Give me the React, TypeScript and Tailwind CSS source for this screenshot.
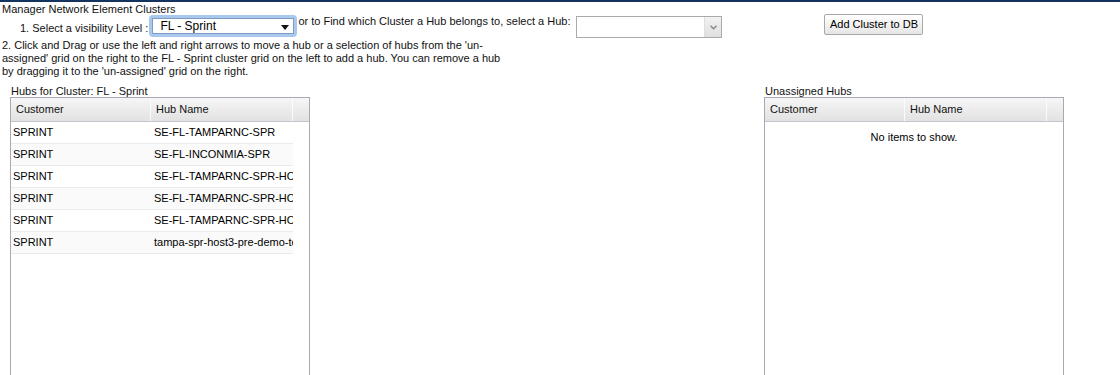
import React from "react";

const rows = [
  ["SPRINT", "SE-FL-TAMPARNC-SPR"],
  ["SPRINT", "SE-FL-INCONMIA-SPR"],
  ["SPRINT", "SE-FL-TAMPARNC-SPR-HOST1"],
  ["SPRINT", "SE-FL-TAMPARNC-SPR-HOST2"],
  ["SPRINT", "SE-FL-TAMPARNC-SPR-HOST3"],
  ["SPRINT", "tampa-spr-host3-pre-demo-test"],
];

function GridHeader() {
  return (
    <div className="flex h-[24px] border-b border-[#c4c4cc] bg-gradient-to-b from-[#f6f6f6] to-[#e2e2e2]">
      <div className="w-[140px] border-r border-r-[#fbfbfb] pl-[5px] flex items-center shrink-0">Customer</div>
      <div className="w-[142px] border-r border-r-[#fbfbfb] pl-[5px] flex items-center shrink-0">Hub Name</div>
      <div className="flex-1" />
    </div>
  );
}

export default function App() {
  return (
    <div
      className="w-[1120px] h-[375px] overflow-hidden bg-white text-[11px] leading-[13px] text-[#111]"
      style={{ fontFamily: '"Liberation Sans", Arial, sans-serif' }}
    >
      <div className="h-[2px] bg-[#15335f]" />
      <div className="pl-[2px] pt-[1px]">Manager Network Element Clusters</div>

      <div className="flex items-start h-[24px] mt-[-2px]">
        <div className="ml-[20px] mt-[8px] whitespace-nowrap">1. Select a visibility Level :</div>
        <div className="ml-[1px] mt-[1px] w-[148px] h-[22px] rounded-[4px] bg-[#a9c8ee] p-[3px] shrink-0">
          <div className="relative w-full h-full bg-white border border-[#7c9cc4] flex items-center pl-[7px] text-[12px] text-black">
            FL - Sprint
            <svg className="absolute right-[4px] top-[6px]" width="8" height="5" viewBox="0 0 8 5">
              <path d="M0 0 L8 0 L4 5 Z" fill="#111" />
            </svg>
          </div>
        </div>
        <div className="ml-[1px] mt-[1px] whitespace-nowrap">or to Find which Cluster a Hub belongs to, select a Hub:</div>
        <div className="ml-[6px] mt-[2px] w-[146px] h-[22px] border border-[#aaaaaa] flex shrink-0 bg-white">
          <div className="flex-1" />
          <div className="w-[17px] h-full bg-gradient-to-b from-[#f2f2f2] to-[#e0e0e0] border-l border-[#dedede] flex items-center justify-center">
            <svg width="7" height="5" viewBox="0 0 7 5">
              <path d="M0.5 0.8 L3.5 3.8 L6.5 0.8" stroke="#8a8a8a" strokeWidth="1.5" fill="none" />
            </svg>
          </div>
        </div>
        <button className="ml-[102px] mt-[0px] w-[99px] h-[21px] border border-[#a8a8a8] rounded-[2px] bg-gradient-to-b from-[#ffffff] to-[#e6e6e6] text-[11px] text-black flex items-center justify-center shrink-0">
          Add Cluster to DB
        </button>
      </div>

      <div className="pl-[2px] mt-[1px] whitespace-nowrap leading-[13px]">
        2. Click and Drag or use the left and right arrows to move a hub or a selection of hubs from the 'un-
        <br />
        assigned' grid on the right to the FL - Sprint cluster grid on the left to add a hub. You can remove a hub
        <br />
        by dragging it to the 'un-assigned' grid on the right.
      </div>

      <div className="flex mt-[7px]">
        <div className="ml-[10px] w-[300px] shrink-0">
          <div className="pl-[1px] h-[12px] leading-[12px]">Hubs for Cluster: FL - Sprint</div>
          <div className="border border-[#a9a9b5] h-[300px] bg-white">
            <GridHeader />
            {rows.map((r, i) => (
              <div key={i} className="flex h-[22px]">
                <div className={`flex w-[282px] border-b border-[#ebebeb] ${i % 2 === 1 ? "bg-[#fafafa]" : "bg-white"}`}>
                  <div className="w-[140px] pl-[2px] flex items-center shrink-0 text-black">{r[0]}</div>
                  <div className="w-[142px] pl-[3px] flex items-center overflow-hidden whitespace-nowrap shrink-0 text-black">{r[1]}</div>
                </div>
              </div>
            ))}
          </div>
        </div>

        <div className="ml-[454px] w-[300px] shrink-0">
          <div className="pl-[1px] h-[12px] leading-[12px]">Unassigned Hubs</div>
          <div className="border border-[#a9a9b5] h-[300px] bg-white">
            <GridHeader />
            <div className="text-center pt-[9px] text-black">No items to show.</div>
          </div>
        </div>
      </div>
    </div>
  );
}
